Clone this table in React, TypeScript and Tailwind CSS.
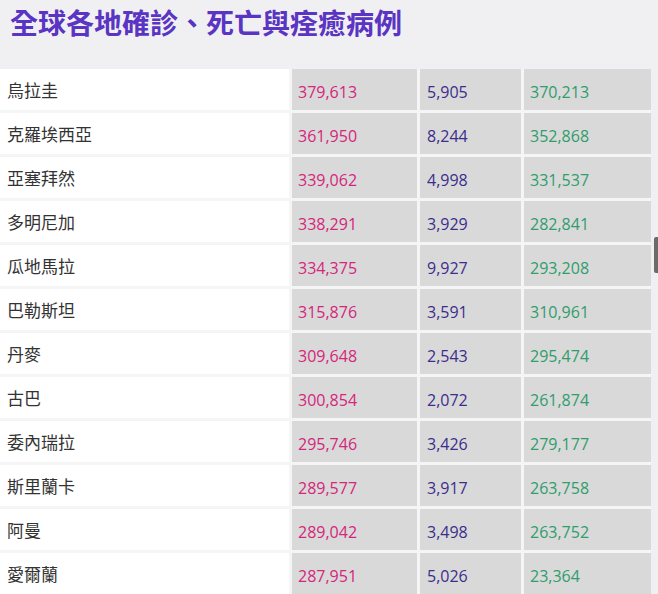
const rows: [string, string, string, string][] = [
  ['烏拉圭', '379,613', '5,905', '370,213'],
  ['克羅埃西亞', '361,950', '8,244', '352,868'],
  ['亞塞拜然', '339,062', '4,998', '331,537'],
  ['多明尼加', '338,291', '3,929', '282,841'],
  ['瓜地馬拉', '334,375', '9,927', '293,208'],
  ['巴勒斯坦', '315,876', '3,591', '310,961'],
  ['丹麥', '309,648', '2,543', '295,474'],
  ['古巴', '300,854', '2,072', '261,874'],
  ['委內瑞拉', '295,746', '3,426', '279,177'],
  ['斯里蘭卡', '289,577', '3,917', '263,758'],
  ['阿曼', '289,042', '3,498', '263,752'],
  ['愛爾蘭', '287,951', '5,026', '23,364'],
]

export default function App() {
  return (
    <div
      className="relative w-[658px] h-[594px] overflow-hidden bg-[#f0f0f2]"
      style={{ fontFamily: '"Open Sans", "Noto Sans CJK TC", sans-serif' }}
    >
      <h2 className="h-[69px] pl-[10px] pt-[5px] text-[28px] font-bold leading-[36px] text-[#5a34c3]">
        全球各地確診、死亡與痊癒病例
      </h2>

      <div className="grid w-[651px] grid-cols-[289px_125px_101px_127px] gap-[3px] bg-[#f5f5f5]">
        {rows.map(([name, cases, deaths, recovered]) => (
          <div key={name} className="contents">
            <div className="flex h-[41px] items-center bg-white pl-[7px] pt-[3px] text-[17px] text-[#333333]">
              {name}
            </div>
            <div className="flex h-[41px] items-center bg-[#d9d9d9] pl-[6px] pt-[4px] text-[16px] text-[#d4267c]">
              {cases}
            </div>
            <div className="flex h-[41px] items-center bg-[#d9d9d9] pl-[7px] pt-[4px] text-[16px] text-[#3b2d8c]">
              {deaths}
            </div>
            <div className="flex h-[41px] items-center bg-[#d9d9d9] pl-[6px] pt-[4px] text-[16px] text-[#2f9d6c]">
              {recovered}
            </div>
          </div>
        ))}
      </div>

      {/* scrollbar thumb */}
      <div className="absolute right-0 top-[237px] h-[36px] w-[4px] rounded-l-[2px] bg-[#6b6b6b]" />
    </div>
  )
}
